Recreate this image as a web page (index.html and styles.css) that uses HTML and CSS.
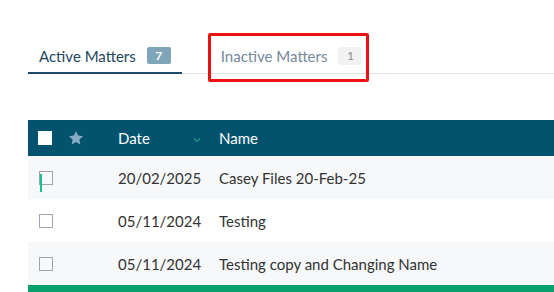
FILE: index.html
```html
<!DOCTYPE html>
<html lang="en">
<head>
  <meta charset="UTF-8">
  <meta name="viewport" content="width=device-width, initial-scale=1.0">
  <title>Matters</title>
  <link rel="stylesheet" href="styles.css">
</head>
<body>
  <div class="page">
    <div class="tabs">
      <div class="tab active">Active Matters <span class="badge">7</span></div>
      <div class="tab inactive">Inactive Matters <span class="badge">1</span></div>
    </div>

    <div class="table">
      <div class="row head">
        <div class="cell"><span class="check white"></span></div>
        <div class="cell">
          <svg width="16" height="16" viewBox="0 0 24 24"><path fill="#87abc0" d="M12 1.5l3.2 6.7 7.3 1-5.4 5.1 1.4 7.3L12 18.1l-6.5 3.5 1.4-7.3-5.4-5.1 7.3-1z"/></svg>
        </div>
        <div class="cell date-head">Date
          <svg class="chev" width="8" height="6" viewBox="0 0 8 6"><path d="M1 1.5l3 3 3-3" fill="none" stroke="#1a9b85" stroke-width="1.2"/></svg>
        </div>
        <div class="cell">Name</div>
      </div>
      <div class="row shade">
        <div class="cell"><span class="check focused"></span></div>
        <div class="cell"></div>
        <div class="cell">20/02/2025</div>
        <div class="cell">Casey Files 20-Feb-25</div>
      </div>
      <div class="row">
        <div class="cell"><span class="check"></span></div>
        <div class="cell"></div>
        <div class="cell">05/11/2024</div>
        <div class="cell">Testing</div>
      </div>
      <div class="row shade">
        <div class="cell"><span class="check"></span></div>
        <div class="cell"></div>
        <div class="cell">05/11/2024</div>
        <div class="cell">Testing copy and Changing Name</div>
      </div>
      <div class="footer-bar"></div>
    </div>
  </div>
</body>
</html>
```

FILE: styles.css
```css
body {
  margin: 0;
  font-family: Lato, "Noto Sans", sans-serif;
  background: #fff;
  overflow: hidden;
}
.page {
  padding: 33px 0 0 28px;
}
.tabs {
  display: flex;
  align-items: stretch;
  border-bottom: 1px solid #e3e3e3;
  height: 40px;
}
.tab {
  display: flex;
  align-items: center;
  font-size: 15px;
  box-sizing: border-box;
}
.tab.active {
  color: #1d4560;
  padding: 6px 11px 0 11px;
  border-bottom: 2px solid #1d4a66;
  margin-bottom: -1px;
}
.tab.inactive {
  color: #76889a;
  margin-left: 26px;
  padding: 0 4px 3px 10px;
  border: 3px solid #ee1111;
  border-radius: 2px;
  height: 49px;
}
.badge {
  display: inline-block;
  font-size: 12px;
  font-weight: bold;
  text-align: center;
  line-height: 17px;
  margin-left: 11px;
  border-radius: 2px;
}
.active .badge {
  background: #7fa6b8;
  color: #fff;
  width: 24px;
}
.inactive .badge {
  background: #f2f2f2;
  color: #8a8a8a;
  font-weight: normal;
  width: 24px;
  line-height: 18px;
}
.table {
  margin-top: 46px;
  width: 526px;
  overflow: hidden;
}
.row {
  display: grid;
  grid-template-columns: 40px 50px 101px 1fr;
  align-items: center;
  height: 43px;
  font-size: 15px;
  color: #333;
}
.row.head {
  height: 36px;
  background: #03536f;
  color: #fff;
}
.row.shade {
  background: #f7f8fa;
}
.row:last-of-type {
  height: 44px;
}
.cell {
  display: flex;
  align-items: center;
  white-space: nowrap;
}
.date-head {
  justify-content: space-between;
  padding-right: 18px;
}
.chev {
  margin-top: 3px;
}
.check {
  display: inline-block;
  width: 12px;
  height: 12px;
  border: 1px solid #a1a4af;
  margin-left: 11px;
  position: relative;
}
.check.white {
  width: 14px;
  height: 14px;
  border: none;
  background: #fff;
  margin-left: 10px;
}
.check.focused::before {
  content: "";
  position: absolute;
  left: 0;
  top: 2px;
  width: 2px;
  height: 18px;
  background: #18c28a;
}
.footer-bar {
  height: 8px;
  background: #0aa06e;
}
```
